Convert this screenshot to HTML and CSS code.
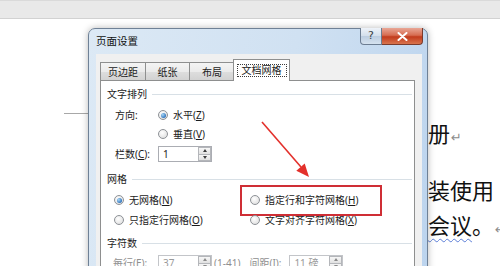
FILE: index.html
```html
<!DOCTYPE html>
<html lang="zh-CN">
  <head>
    <meta charset="UTF-8" />
    <meta name="viewport" content="width=device-width, initial-scale=1.0" />
    <title>页面设置</title>
    <link rel="stylesheet" href="styles.css">
  </head>
  <body>
    <div class="screen">
      <div class="ribbon"></div>

      <!-- the Word page behind the dialog -->
      <div class="page">
        <div class="crop-mark"></div>
        <div class="doc-text">
          <p class="para">册<span class="mark">↵</span></p>
          <p class="para gap">装使用</p>
          <p class="para"><span class="squiggle">会议</span>。<span class="mark">↵</span></p>
          <p class="para last"><span class="mark">↵</span></p>
        </div>
      </div>

      <div class="dialog">
        <div class="titlebar">
          <span class="title">页面设置</span>
          <div class="caption-btns">
            <span class="btn-help">?</span>
            <span class="btn-close">
              <svg width="11" height="9" viewBox="0 0 11 9">
                <path d="M1.5 1 L9.5 8 M9.5 1 L1.5 8" stroke="#fff" stroke-width="2" stroke-linecap="round" />
              </svg>
            </span>
          </div>
        </div>

        <div class="client">
          <div class="tabs">
            <span class="tab">页边距</span>
            <span class="tab">纸张</span>
            <span class="tab">布局</span>
            <span class="tab active"><span class="focus">文档网格</span></span>
          </div>

          <div class="panel">
            <div class="group-head"><span>文字排列</span></div>
            <div class="arrange">
              <span class="label">方向:</span>
              <span class="option"><span class="radio on"></span><span>水平(<u>Z</u>)</span></span>
              <span></span>
              <span class="option"><span class="radio"></span><span>垂直(<u>V</u>)</span></span>
              <span class="label">栏数(<u>C</u>):</span>
              <span class="spin">
                <span class="spin-value">1</span>
                <span class="spin-btns"><span class="up"></span><span class="down"></span></span>
              </span>
            </div>

            <div class="group-head grid-head"><span>网格</span></div>
            <div class="grid-options">
              <span class="option"><span class="radio on"></span><span>无网格(<u>N</u>)</span></span>
              <span class="option highlight"><span class="radio"></span><span>指定行和字符网格(<u>H</u>)</span></span>
              <span class="option"><span class="radio"></span><span>只指定行网格(<u>O</u>)</span></span>
              <span class="option"><span class="radio"></span><span>文字对齐字符网格(<u>X</u>)</span></span>
            </div>

            <div class="group-head chars-head"><span>字符数</span></div>
            <div class="char-row">
              <span class="label">每行(<u>E</u>):</span>
              <span class="spin disabled">
                <span class="spin-value">37</span>
                <span class="spin-btns"><span class="up"></span><span class="down"></span></span>
              </span>
              <span class="range">(1-41)</span>
              <span class="label pitch">间距(<u>I</u>):</span>
              <span class="spin disabled">
                <span class="spin-value">11 磅</span>
                <span class="spin-btns"><span class="up"></span><span class="down"></span></span>
              </span>
            </div>
          </div>
        </div>
      </div>

      <!-- annotation arrow drawn over the screenshot -->
      <svg class="arrow" width="500" height="266" viewBox="0 0 500 266">
        <line x1="262" y1="122" x2="301" y2="167" stroke="#e3302b" stroke-width="1.6" />
        <polygon points="309,177 296.3,170.7 304.7,163.5" fill="#e3302b" />
      </svg>
    </div>
  </body>
</html>
```

FILE: styles.css
```css
* {
  box-sizing: border-box;
}

body {
  margin: 0;
  font-family: "Noto Sans CJK SC", "Noto Sans", sans-serif;
  background: #fff;
  overflow: hidden;
}

.screen {
  position: relative;
  width: 500px;
  height: 266px;
  overflow: hidden;
}

.ribbon {
  height: 19px;
  background: #e9e9e9;
  border-top: 1px solid #dadada;
  border-bottom: 1px solid #d2d2d2;
}

/* document page */
.page {
  display: flex;
  align-items: flex-start;
}

.crop-mark {
  flex-shrink: 0;
  width: 24px;
  height: 95px;
  margin-left: 64px;
  border-bottom: 1px solid #a8a8a8;
}

.doc-text {
  margin-left: 340px;
  padding-top: 96px;
  font-size: 22px;
  color: #111;
}

.para {
  margin: 0;
  line-height: 35px;
  white-space: nowrap;
}

.para.gap {
  margin-top: 17px;
}

.para.last {
  margin-top: 8px;
  padding-left: 27px;
}

.mark {
  font-family: "DejaVu Sans", sans-serif;
  font-size: 13px;
  color: #8c8c8c;
  margin-left: 1px;
}

.squiggle {
  text-decoration: underline wavy #5b7dd6;
  text-decoration-thickness: 1px;
  text-underline-offset: 4px;
}

/* dialog window */
.dialog {
  position: absolute;
  left: 88px;
  top: 28px;
  width: 340px;
  height: 250px;
  padding: 0 5px 0 7px;
  border: 1px solid #6f8196;
  border-radius: 7px 7px 0 0;
  background: linear-gradient(100deg, #dce9f5 0%, #d0e1f2 55%, #bcd4ee 100%);
  box-shadow: 0 0 7px rgba(0, 0, 0, 0.28);
  font-family: "Noto Sans", "Noto Sans CJK SC", sans-serif;
  font-size: 10px;
  color: #1b1b1b;
  display: flex;
  flex-direction: column;
}

.titlebar {
  height: 25px;
  display: flex;
  justify-content: space-between;
  align-items: flex-start;
}

.title {
  font-size: 10.5px;
  line-height: 25px;
  color: #111;
}

.caption-btns {
  display: flex;
  margin-top: -1px;
  margin-right: -1px;
}

.btn-help {
  width: 22px;
  height: 17px;
  border: 1px solid #6c7d92;
  border-top: none;
  border-radius: 0 0 0 4px;
  background: linear-gradient(#eef3f9, #d3dfeb 50%, #bccde0 51%, #d5e2ef);
  text-align: center;
  font-family: "DejaVu Sans", sans-serif;
  font-size: 11px;
  line-height: 16px;
  color: #3a3f46;
}

.btn-close {
  width: 41px;
  height: 17px;
  border: 1px solid #7a3b2c;
  border-left: none;
  border-top: none;
  border-radius: 0 0 4px 0;
  background: linear-gradient(#e9a796, #d76d52 45%, #c23b1d 55%, #d8744d);
  display: flex;
  align-items: center;
  justify-content: center;
}

.client {
  flex: 1;
  background: #f0f0f0;
  padding: 5px 7px 0 4px;
}

/* tabs */
.tabs {
  display: flex;
  align-items: flex-end;
  height: 21px;
  position: relative;
  z-index: 1;
}

.tab {
  height: 18px;
  margin-left: -1px;
  border: 1px solid #8e8f8f;
  border-bottom: none;
  background: linear-gradient(#f4f4f4, #ebebeb 50%, #dedede 51%, #d2d2d2);
  display: flex;
  align-items: center;
  justify-content: center;
  line-height: 14px;
}

.tab:nth-child(1) {
  width: 46px;
  margin-left: 0;
}

.tab:nth-child(2) {
  width: 45px;
}

.tab:nth-child(3) {
  width: 46px;
}

.tab.active {
  width: 57px;
  height: 22px;
  margin-left: -2px;
  margin-bottom: -1px;
  background: #fff;
  position: relative;
  z-index: 2;
}

.focus {
  border: 1px dotted #3a3a3a;
  padding: 0 4px;
  line-height: 11px;
}

.panel {
  height: 200px;
  background: #fff;
  border: 1px solid #8e8f8f;
  padding: 6px 2px 0 6px;
}

/* group headers with the etched line */
.group-head {
  display: flex;
  align-items: center;
  gap: 5px;
  line-height: 14px;
}

.group-head::after {
  content: "";
  flex: 1;
  height: 1px;
  background: #d8e0e6;
}

.grid-head {
  margin-top: 10px;
}

.chars-head {
  margin-top: 9px;
}

.arrange {
  display: grid;
  grid-template-columns: 43px auto;
  row-gap: 5px;
  align-items: center;
  margin-top: 7px;
  padding-left: 8px;
  justify-items: start;
}

.label {
  line-height: 14px;
}

.option {
  display: flex;
  align-items: center;
  gap: 5px;
  line-height: 14px;
  white-space: nowrap;
}

.radio {
  position: relative;
  flex-shrink: 0;
  width: 10px;
  height: 10px;
  border-radius: 50%;
  border: 1px solid #8d9196;
  background: radial-gradient(circle at 40% 35%, #fff, #d9d9d9);
}

.radio.on::after {
  content: "";
  position: absolute;
  inset: 1.5px;
  border-radius: 50%;
  background: radial-gradient(circle at 35% 35%, #a9d8f7, #2b6fba 75%);
}

/* spin boxes */
.spin {
  display: flex;
  width: 54px;
  height: 16px;
  border: 1px solid #abadb3;
  background: #fff;
}

.spin-value {
  flex: 1;
  padding-left: 4px;
  line-height: 14px;
}

.spin-btns {
  width: 13px;
  display: flex;
  flex-direction: column;
}

.spin-btns span {
  flex: 1;
  border: 1px solid #b4b6ba;
  background: linear-gradient(#f7f7f7, #e1e1e1);
  display: flex;
  align-items: center;
  justify-content: center;
}

.spin-btns .down {
  border-top: none;
}

.spin-btns span::before {
  content: "";
  border-left: 2.5px solid transparent;
  border-right: 2.5px solid transparent;
}

.spin-btns .up::before {
  border-bottom: 3px solid #3c3c3c;
}

.spin-btns .down::before {
  border-top: 3px solid #3c3c3c;
}

.spin.disabled {
  color: #9a9a9a;
  border-color: #c3c5c9;
}

.spin.disabled .spin-btns span::before {
  border-bottom-color: #8a8a8a;
  border-top-color: #8a8a8a;
}

.grid-options {
  display: grid;
  grid-template-columns: 136px 1fr;
  row-gap: 6px;
  margin-top: 7px;
  padding-left: 7px;
}

.highlight {
  position: relative;
}

.highlight::after {
  content: "";
  position: absolute;
  left: -10px;
  top: -8px;
  width: 138px;
  height: 27px;
  border: 2px solid #cf2e35;
}

.char-row {
  display: flex;
  align-items: center;
  margin-top: 5px;
  padding-left: 6px;
  color: #8f8f8f;
}

.char-row .label {
  width: 45px;
}

.range {
  margin-left: 2px;
  line-height: 14px;
}

.char-row .pitch {
  width: 40px;
  margin-left: 9px;
}

.arrow {
  position: absolute;
  left: 0;
  top: 0;
  pointer-events: none;
}
```
